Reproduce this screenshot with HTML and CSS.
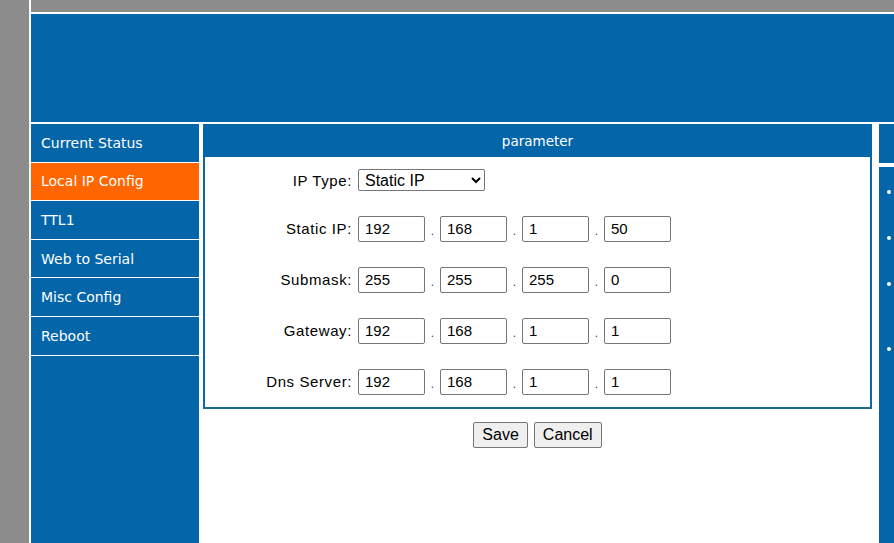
FILE: index.html
```html
<!DOCTYPE html>
<html lang="en">
<head>
    <meta charset="UTF-8">
    <meta name="viewport" content="width=device-width, initial-scale=1.0">
    <title>Local IP Config</title>
    <link rel="stylesheet" href="styles.css">
</head>
<body>
    <div class="page">
        <div class="top-bar"></div>
        <div class="banner"></div>

        <div class="main-row">
            <ul class="menu">
                <li><a href="#">Current Status</a></li>
                <li class="active"><a href="#">Local IP Config</a></li>
                <li><a href="#">TTL1</a></li>
                <li><a href="#">Web to Serial</a></li>
                <li><a href="#">Misc Config</a></li>
                <li><a href="#">Reboot</a></li>
            </ul>

            <div class="content">
                <div class="panel">
                    <div class="panel-title">parameter</div>
                    <div class="panel-body">
                        <div class="form-row first">
                            <label class="field-label" for="iptype">IP Type:</label>
                            <select id="iptype" class="ip-type">
                                <option>Static IP</option>
                                <option>DHCP</option>
                            </select>
                        </div>
                        <div class="form-row">
                            <span class="field-label">Static IP:</span>
                            <input class="octet" type="text" value="192"><span class="dot">.</span><input class="octet" type="text" value="168"><span class="dot">.</span><input class="octet" type="text" value="1"><span class="dot">.</span><input class="octet" type="text" value="50">
                        </div>
                        <div class="form-row">
                            <span class="field-label">Submask:</span>
                            <input class="octet" type="text" value="255"><span class="dot">.</span><input class="octet" type="text" value="255"><span class="dot">.</span><input class="octet" type="text" value="255"><span class="dot">.</span><input class="octet" type="text" value="0">
                        </div>
                        <div class="form-row">
                            <span class="field-label">Gateway:</span>
                            <input class="octet" type="text" value="192"><span class="dot">.</span><input class="octet" type="text" value="168"><span class="dot">.</span><input class="octet" type="text" value="1"><span class="dot">.</span><input class="octet" type="text" value="1">
                        </div>
                        <div class="form-row">
                            <span class="field-label">Dns Server:</span>
                            <input class="octet" type="text" value="192"><span class="dot">.</span><input class="octet" type="text" value="168"><span class="dot">.</span><input class="octet" type="text" value="1"><span class="dot">.</span><input class="octet" type="text" value="1">
                        </div>
                    </div>
                </div>

                <div class="actions">
                    <button type="button">Save</button>
                    <button type="button">Cancel</button>
                </div>
            </div>

            <div class="side">
                <div class="side-head"></div>
                <ul class="side-list">
                    <li></li>
                    <li></li>
                    <li class="tall"></li>
                    <li></li>
                </ul>
            </div>
        </div>
    </div>
</body>
</html>
```

FILE: styles.css
```css
html, body {
    margin: 0;
    height: 100%;
    overflow: hidden;
}
body {
    background-color: #8c8c8c;
    padding-left: 29px;
    font-family: "Liberation Sans", Arial, sans-serif;
}
.page {
    min-height: 100%;
    background-color: #fff;
    border-left: 2px solid #fff;
}
.top-bar {
    height: 12px;
    background-color: #8c8c8c;
    margin-bottom: 2px;
}
.banner {
    height: 108px;
    background-color: #0465a8;
    margin-bottom: 2px;
}
.main-row {
    display: flex;
    align-items: stretch;
    min-height: 440px;
}

/* left menu */
.menu {
    list-style: none;
    margin: 0;
    padding: 0;
    width: 168px;
    flex-shrink: 0;
    background-color: #0465a8;
    font-family: "DejaVu Sans", Verdana, sans-serif;
    font-size: 14px;
}
.menu li {
    height: 37.6px;
    border-bottom: 1px solid #fff;
}
.menu li a {
    display: flex;
    align-items: center;
    height: 100%;
    padding-left: 10px;
    color: #fff;
    text-decoration: none;
}
.menu li.active {
    background-color: #ff6600;
}

/* centre panel */
.content {
    width: 669px;
    flex-shrink: 0;
    margin-left: 4px;
}
.panel-title {
    height: 33px;
    line-height: 34px;
    background-color: #0465a8;
    color: #fff;
    text-align: center;
    font-family: "DejaVu Sans", Verdana, sans-serif;
    font-size: 13.5px;
}
.panel-body {
    border: 2px solid #0b67a6;
    border-top: none;
    border-bottom-color: #1d6a8e;
}
.form-row {
    display: flex;
    align-items: center;
    height: 51px;
}
.form-row.first {
    height: 46px;
}
.field-label {
    width: 147px;
    text-align: right;
    margin-right: 6px;
    font-size: 15px;
    letter-spacing: 0.6px;
    color: #000;
}
.ip-type {
    width: 127px;
    height: 22px;
    font-family: "Liberation Sans", Arial, sans-serif;
    font-size: 16px;
    border: 1px solid #767676;
    border-radius: 2px;
    background-color: #fff;
    padding: 0 2px;
}
.octet {
    box-sizing: border-box;
    width: 67px;
    height: 26px;
    padding: 0 6px;
    border: 1px solid #767676;
    border-radius: 2px;
    font-family: "Liberation Sans", Arial, sans-serif;
    font-size: 15px;
    color: #000;
}
.dot {
    width: 15px;
    text-align: center;
    font-size: 12px;
    color: #444;
    padding-top: 4px;
}
.actions {
    display: flex;
    justify-content: center;
    gap: 6px;
    margin-top: 13px;
}
.actions button {
    height: 26px;
    padding: 0 8px;
    font-family: "Liberation Sans", Arial, sans-serif;
    font-size: 16px;
    color: #000;
    background-color: #efefef;
    border: 1px solid #767676;
    border-radius: 2px;
}

/* right column, cut off by the window edge */
.side {
    flex: 1;
    min-width: 0;
    margin-left: 7px;
    display: flex;
    flex-direction: column;
}
.side-head {
    height: 39px;
    background-color: #0465a8;
    margin-bottom: 4px;
}
.side-list {
    flex: 1;
    margin: 0;
    padding: 0 0 0 8px;
    background-color: #0465a8;
    list-style: none;
}
.side-list li {
    box-sizing: border-box;
    height: 46px;
    padding-top: 23px;
}
.side-list li::before {
    content: "";
    display: block;
    width: 4px;
    height: 4px;
    border-radius: 50%;
    background-color: #fff;
}
.side-list li.tall {
    height: 65px;
}
```
